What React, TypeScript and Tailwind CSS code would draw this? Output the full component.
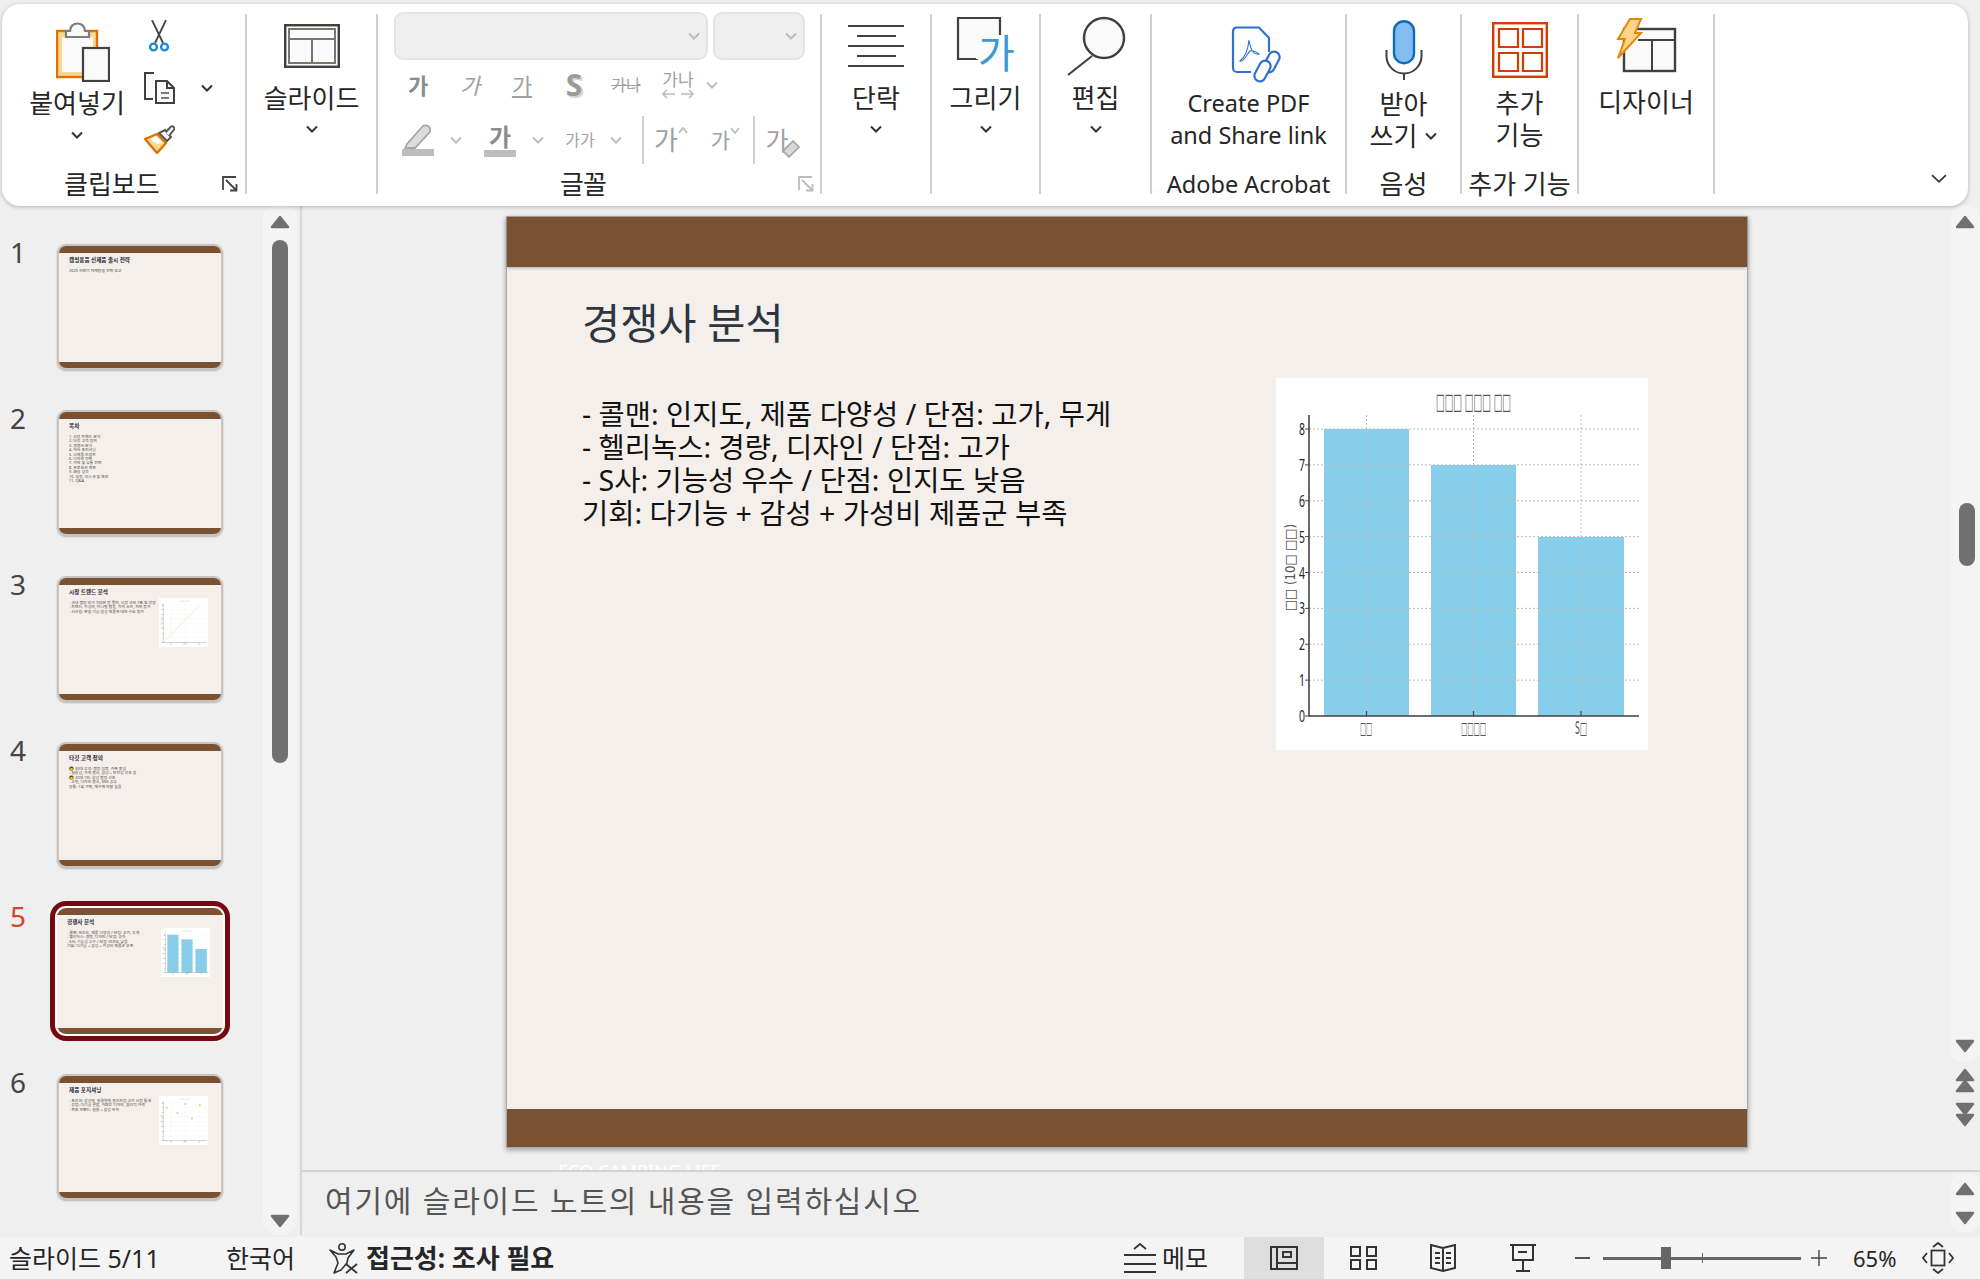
import React from "react";

const dark = "#404040";

const Chev = ({ gray = false, big = false }: { gray?: boolean; big?: boolean }) => (
  <svg width={big ? 18 : 12} height={big ? 11 : 8} viewBox="0 0 12 8" className="shrink-0">
    <path d="M1 1.5 6 6.5 11 1.5" fill="none" stroke={gray ? "#bdbdbd" : "#333"} strokeWidth={big ? 1.2 : 2} />
  </svg>
);

const Launcher = ({ gray = false }: { gray?: boolean }) => (
  <svg width="16" height="16" viewBox="0 0 16 16" className="shrink-0">
    <path d="M1 14V1H14M4 4 14.5 14.5M14.5 8V14.5H8" fill="none" stroke={gray ? "#bdbdbd" : "#444"} strokeWidth="1.8" />
  </svg>
);

const PasteIcon = () => (
  <svg width="54" height="60" viewBox="0 0 54 60">
    <rect x="1" y="9" width="40" height="46" fill="#fad98f" stroke="#e07000" strokeWidth="2.4" />
    <rect x="6" y="15" width="31" height="35" fill="#fafafa" />
    <path d="M10 15V9H14C14 -1 29 -1 29 9H33V15Z" fill="#fafafa" stroke="#7d7d7d" strokeWidth="2.2" />
    <rect x="27" y="26" width="26" height="33" fill="#fafafa" stroke={dark} strokeWidth="2.2" />
  </svg>
);

const Scissors = () => (
  <svg width="22" height="32" viewBox="0 0 22 32">
    <path d="M4 0 15 23M18 0 7 23" fill="none" stroke="#444" strokeWidth="1.8" />
    <circle cx="5.5" cy="27" r="3.4" fill="#fff" stroke="#1e8ad2" strokeWidth="2.4" />
    <circle cx="16.5" cy="27" r="3.4" fill="#fff" stroke="#1e8ad2" strokeWidth="2.4" />
  </svg>
);

const CopyIcon = () => (
  <svg width="32" height="32" viewBox="0 0 32 32">
    <path d="M11 1H2V27H10" fill="#fafafa" stroke={dark} strokeWidth="2" />
    <path d="M13 9H24L31 16V31H13Z" fill="#fafafa" stroke={dark} strokeWidth="2" />
    <path d="M24 9V16H31" fill="none" stroke={dark} strokeWidth="2" />
    <path d="M18 21H26M18 26H26" stroke="#7a7a7a" strokeWidth="2" />
  </svg>
);

const BrushIcon = () => (
  <svg width="32" height="30" viewBox="0 0 32 30">
    <path d="M2 15 14 10 23 19 14 29Z" fill="#fad98f" stroke="#e07000" strokeWidth="2.4" strokeLinejoin="round" />
    <path d="M13 12 20 19 14 20 7 15Z" fill="#fff" />
    <path d="M16 9 24 17 28 13 22 6Z" fill="#fafafa" stroke="#555" strokeWidth="2" />
    <path d="M23 8 28 2.5A2.2 2.2 0 0 1 31 5.5L26 12" fill="#fafafa" stroke="#555" strokeWidth="2" />
  </svg>
);

const SlideIcon = () => (
  <svg width="56" height="44" viewBox="0 0 56 44">
    <rect x="1.2" y="1.2" width="53.6" height="41.6" fill="#fafafa" stroke={dark} strokeWidth="2.4" />
    <path d="M5 5H51V39H5ZM5 15H51M28 15V39" fill="none" stroke="#77776f" strokeWidth="2" />
  </svg>
);

const ParaIcon = () => (
  <svg width="58" height="44" viewBox="0 0 58 44">
    <path d="M1 2H57M10 12H49M1 22H57M10 32H49M1 42H57" stroke={dark} strokeWidth="2" />
  </svg>
);

const DrawIcon = () => (
  <svg width="60" height="62" viewBox="0 0 60 62">
    <path d="M44 20V3H2V44H22" fill="#fafafa" stroke={dark} strokeWidth="2.2" />
    <path d="M20 20H44V44H20Z" fill="#fafafa" />
    <text x="22" y="53" fontSize="40" fill="#3a9ad9">가</text>
  </svg>
);

const FindIcon = () => (
  <svg width="62" height="62" viewBox="0 0 62 62">
    <path d="M27 41 3 60" stroke={dark} strokeWidth="2.2" />
    <circle cx="39" cy="23" r="20" fill="#fafafa" stroke={dark} strokeWidth="2.4" />
  </svg>
);

const AcrobatIcon = () => (
  <svg width="52" height="57" viewBox="0 0 52 57">
    <path d="M20 46H6A4 4 0 0 1 2 42V5A4 4 0 0 1 6 1.5H28L38 12V26" fill="#fff" stroke="#2f6fd6" strokeWidth="2.2" />
    <path d="M18 14C17 24 14 31 9 35 12 37 16 28 19 25 22 24 27 27 28 28 24 29 20 27 18 14Z" fill="none" stroke="#2f6fd6" strokeWidth="1.1" />
    <rect x="35" y="25" width="11" height="22" rx="5.5" fill="#fff" stroke="#2f6fd6" strokeWidth="2.2" transform="rotate(28 40.5 36)" />
    <rect x="26" y="34" width="11" height="22" rx="5.5" fill="#fff" stroke="#2f6fd6" strokeWidth="2.2" transform="rotate(28 31.5 45)" />
  </svg>
);

const MicIcon = () => (
  <svg width="38" height="60" viewBox="0 0 38 60">
    <path d="M1.5 30V36A17.5 17.5 0 0 0 36.5 36V30M19 53V60" fill="none" stroke={dark} strokeWidth="2" />
    <rect x="9" y="1.2" width="20" height="42" rx="10" fill="#83bdf0" stroke="#0f6cbd" strokeWidth="2.4" />
  </svg>
);

const AddinsIcon = () => (
  <svg width="56" height="56" viewBox="0 0 56 56">
    <rect x="1.2" y="1.2" width="53.6" height="53.6" fill="#fff" stroke="#d83b01" strokeWidth="2.4" />
    <path d="M7 7H26V25H7ZM31 7H50V25H31ZM7 31H26V49H7ZM31 31H50V49H31Z" fill="#fff" stroke="#d83b01" strokeWidth="2.2" />
  </svg>
);

const DesignerIcon = () => (
  <svg width="61" height="55" viewBox="0 0 61 55">
    <rect x="8" y="11" width="51" height="42" fill="#fafafa" stroke={dark} strokeWidth="2.4" />
    <path d="M22 22H58M36 22V52" stroke={dark} strokeWidth="2" />
    <path d="M14 1H25L19 15H25L2 40 9 21H2Z" fill="#fcd58a" stroke="#e8860c" strokeWidth="2" strokeLinejoin="miter" />
  </svg>
);

const Group = ({ w, label, children, labelRow }: { w: string; label?: string; children: React.ReactNode; labelRow?: React.ReactNode }) => (
  <div className={`${w} h-[180px] shrink-0 border-r-2 border-[#cfcfcf] flex flex-col`}>
    <div className="h-[160px] flex flex-col items-center">{children}</div>
    <div className="h-[20px] leading-[20px] text-[26px] text-center whitespace-nowrap">
      {labelRow ?? label}
    </div>
  </div>
);

const BigLabel = ({ children }: { children: React.ReactNode }) => (
  <div className="h-[30px] leading-[30px] text-[26px] whitespace-nowrap text-center">{children}</div>
);

const Simple = ({ icon, text }: { icon: React.ReactNode; text: string }) => (
  <>
    <div className="h-[64px] flex items-center justify-center">{icon}</div>
    <div className="mt-[5px]"><BigLabel>{text}</BigLabel></div>
    <div className="mt-[12px] flex"><Chev /></div>
  </>
);

const gray = "text-[#a0a0a0]";

const FontGroup = () => (
  <Group
    w="w-[444px]"
    labelRow={
      <div className="flex items-center pl-[182px]">
        <span className="w-[234px] text-left tracking-[-1px]">글꼴</span>
        <span className="ml-[4px] flex"><Launcher gray /></span>
      </div>
    }
  >
    <div className="w-full pl-[16px]">
      <div className="mt-[-2px] flex gap-[5px]">
        <div className="w-[314px] h-[48px] rounded-[9px] bg-[#efefef] border-2 border-[#e4e4e4] flex items-center justify-end pr-[6px]"><Chev gray /></div>
        <div className="w-[92px] h-[48px] rounded-[9px] bg-[#efefef] border-2 border-[#e4e4e4] flex items-center justify-end pr-[6px]"><Chev gray /></div>
      </div>
      <div className={`ml-[-2px] mt-[10px] h-[30px] flex items-center ${gray}`}>
        <span className="w-[52px] text-center text-[22px] font-bold leading-[30px] text-[#8c8c8c]">가</span>
        <span className="w-[52px] text-center text-[22px] italic leading-[30px]">가</span>
        <span className="w-[52px] text-center text-[22px] underline leading-[30px]">가</span>
        <span className="w-[52px] text-center text-[30px] font-bold leading-[30px] text-[#9a9a9a] [text-shadow:2px_2px_0_#d6d6d6]">S</span>
        <span className="w-[52px] text-center text-[16px] line-through leading-[30px]">가나</span>
        <span className="w-[52px] flex flex-col items-center">
          <span className="text-[17px] leading-[18px]">가나</span>
          <svg width="32" height="10" viewBox="0 0 32 10"><path d="M13 5H1M5 1 1 5 5 9M19 5H31M27 1 31 5 27 9" fill="none" stroke="#bdbdbd" strokeWidth="1.6" /></svg>
        </span>
        <span className="ml-[2px] flex"><Chev gray /></span>
      </div>
      <div className={`ml-[4px] mt-[16px] h-[48px] flex items-center ${gray}`}>
        <span className="w-[40px] flex justify-center">
          <svg width="32" height="32" viewBox="0 0 32 32">
            <path d="M5 20 20 3A3 3 0 0 1 27 9L13 24H7L3 25Z" fill="#dcdcdc" stroke="#a4a4a4" strokeWidth="1.8" />
            <rect x="0" y="25" width="32" height="7" fill="#bdbdbd" />
          </svg>
        </span>
        <span className="w-[36px] flex justify-center"><Chev gray /></span>
        <span className="w-[52px] flex flex-col items-center">
          <span className="text-[24px] font-bold leading-[26px] text-[#8c8c8c]">가</span>
          <span className="w-[32px] h-[7px] bg-[#bdbdbd]" />
        </span>
        <span className="w-[24px] flex justify-center"><Chev gray /></span>
        <span className="w-[60px] text-center text-[16px]">가가</span>
        <span className="w-[12px] flex justify-center"><Chev gray /></span>
        <span className="ml-[20px] w-[2px] h-[48px] bg-[#cfcfcf]" />
        <span className="w-[54px] flex justify-center items-start text-[26px] leading-[34px]">
          가
          <svg width="10" height="7" viewBox="0 0 10 7" className="mt-[4px]"><path d="M1 6 5 1 9 6" fill="none" stroke="#bdbdbd" strokeWidth="1.8" /></svg>
        </span>
        <span className="w-[55px] flex justify-center items-start text-[21px] leading-[34px]">
          가
          <svg width="10" height="7" viewBox="0 0 10 7" className="mt-[4px]"><path d="M1 1 5 6 9 1" fill="none" stroke="#bdbdbd" strokeWidth="1.8" /></svg>
        </span>
        <span className="w-[2px] h-[48px] bg-[#cfcfcf]" />
        <span className="w-[54px] relative text-center text-[25px] leading-[30px]">
          <span className="mr-[10px]">가</span>
          <svg width="20" height="20" viewBox="0 0 20 20" className="absolute right-[8px] top-[14px]"><path d="M2 12 12 2 18 8 8 18Z" fill="#d8d8d8" stroke="#ababab" strokeWidth="1.8" /></svg>
        </span>
      </div>
    </div>
  </Group>
);

const Ribbon = () => (
  <div className="ml-[2px] mt-[4px] w-[1966px] h-[202px] bg-white rounded-[18px] shadow-[0_1px_4px_rgba(0,0,0,0.25)] pt-[10px] flex text-[#262626] relative z-10">
    <Group
      w="w-[245px]"
      labelRow={
        <div className="flex items-center pl-[62px]">
          <span>클립보드</span>
          <span className="ml-auto mr-[7px] flex"><Launcher /></span>
        </div>
      }
    >
      <div className="w-full flex">
        <div className="w-[138px] pl-[12px] flex flex-col items-center">
          <div className="pt-[8px] pl-[12px] flex"><PasteIcon /></div>
          <div className="mt-[6px]"><BigLabel>붙여넣기</BigLabel></div>
          <div className="mt-[13px] flex"><Chev /></div>
        </div>
        <div className="w-[38px] flex flex-col items-center pt-[6px]">
          <Scissors />
          <div className="mt-[20px] flex"><CopyIcon /></div>
          <div className="mt-[20px] flex"><BrushIcon /></div>
        </div>
        <div className="ml-[23px] mt-[70px]"><Chev /></div>
      </div>
    </Group>
    <Group w="w-[131px]"><Simple icon={<SlideIcon />} text="슬라이드" /></Group>
    <FontGroup />
    <Group w="w-[110px]"><Simple icon={<ParaIcon />} text="단락" /></Group>
    <Group w="w-[109px]"><Simple icon={<DrawIcon />} text="그리기" /></Group>
    <Group w="w-[111px]"><Simple icon={<FindIcon />} text="편집" /></Group>
    <Group w="w-[195px]" label="">
      <div className="pt-[12px] pl-[16px] flex"><AcrobatIcon /></div>
      <div className="mt-[4px] text-[23.5px] leading-[32px] text-center whitespace-nowrap">
        <div>Create PDF</div>
        <div>and Share link</div>
      </div>
      <div className="mt-auto h-0 text-[23.5px] leading-[0px] translate-y-[10px] whitespace-nowrap">Adobe Acrobat</div>
    </Group>
    <Group w="w-[115px]" label="음성">
      <div className="pt-[6px] flex"><MicIcon /></div>
      <div className="mt-[8px] text-[26px] leading-[32px] text-center whitespace-nowrap">
        <div>받아</div>
        <div className="flex items-center justify-center gap-[8px]">쓰기 <Chev /></div>
      </div>
    </Group>
    <Group w="w-[117px]" label="추가 기능">
      <div className="pt-[8px] flex"><AddinsIcon /></div>
      <div className="mt-[9px] text-[26px] leading-[32px] text-center whitespace-nowrap">
        <div>추가</div>
        <div>기능</div>
      </div>
    </Group>
    <Group w="w-[136px]">
      <div className="pt-[4px] flex"><DesignerIcon /></div>
      <div className="mt-[14px]"><BigLabel>디자이너</BigLabel></div>
    </Group>
    <div className="ml-auto mr-[20px] mb-[22px] self-end flex"><Chev big /></div>
  </div>
);

const Arrow = ({ down = false, w = 20 }: { down?: boolean; w?: number }) => (
  <svg width={w} height="14" viewBox="0 0 20 14" className="shrink-0">
    <path d={down ? "M2 2H18L10 12Z" : "M10 2 18 12H2Z"} fill="#707070" stroke="#707070" strokeWidth="2.4" strokeLinejoin="round" />
  </svg>
);

const Grid = ({ bars, points, line }: { bars?: boolean; points?: boolean; line?: boolean }) => {
  const ys = [0, 1, 2, 3, 4, 5, 6, 7, 8];
  return (
    <svg viewBox="0 0 372 372" className="w-full h-full block bg-white">
      {bars && (
        <>
          <rect x="48" y="51" width="85" height="287" fill="#87ceeb" />
          <rect x="155" y="87" width="85" height="251" fill="#87ceeb" />
          <rect x="262" y="159" width="86" height="179" fill="#87ceeb" />
        </>
      )}
      {ys.map((k) => (
        <g key={k}>
          <line x1="33" x2="363" y1={338 - 35.875 * k} y2={338 - 35.875 * k} stroke="#bcbcbc" strokeDasharray="2 2" strokeWidth="1" />
          <line x1="29" x2="33" y1={338 - 35.875 * k} y2={338 - 35.875 * k} stroke="#444" strokeWidth="1" />
          <text x="23" y={344 - 35.875 * k} fontSize="16" fill="#222" textLength="6" lengthAdjust="spacingAndGlyphs">{k}</text>
        </g>
      ))}
      {[90.5, 197.5, 305].map((x) => (
        <g key={x}>
          <line x1={x} x2={x} y1="37" y2="338" stroke="#bcbcbc" strokeDasharray="2 2" strokeWidth="1" />
          <line x1={x} x2={x} y1="333" y2="338" stroke="#444" strokeWidth="1.2" />
        </g>
      ))}
      {line && <path d="M33 338 305 60" stroke="#f4c87a" strokeWidth="3" fill="none" />}
      {points && [[60, 90], [140, 130], [200, 60], [250, 170], [310, 70]].map(([x, y]) => (
        <circle key={x} cx={x} cy={y} r="7" fill="#f4b76a" />
      ))}
      <path d="M33 37V338H363" fill="none" stroke="#444" strokeWidth="1.6" />
      <text x="160" y="31" fontSize="22" fill="#555" textLength="75" lengthAdjust="spacingAndGlyphs" fontFamily="'DejaVu Sans', sans-serif">□□□ □□□ □□</text>
      <text transform="translate(19 233) rotate(-90)" fontSize="14" fill="#555" textLength="87" lengthAdjust="spacingAndGlyphs" fontFamily="'DejaVu Sans', sans-serif">□□ (10□ □□)</text>
      <text x="84" y="356" fontSize="17" fill="#555" textLength="12" lengthAdjust="spacingAndGlyphs" fontFamily="'DejaVu Sans', sans-serif">□□</text>
      <text x="185" y="356" fontSize="17" fill="#555" textLength="25" lengthAdjust="spacingAndGlyphs" fontFamily="'DejaVu Sans', sans-serif">□□□□</text>
      <text x="299" y="356" fontSize="17" fill="#555" textLength="12" lengthAdjust="spacingAndGlyphs" fontFamily="'DejaVu Sans', sans-serif">S□</text>
    </svg>
  );
};

const slides: { title: string; lines: string[]; chart?: "line" | "bar" | "dots" }[] = [
  { title: "캠핑용품 신제품 출시 전략", lines: ["2025 하반기 마케팅실 전략 보고"] },
  {
    title: "목차",
    lines: ["1. 시장 트렌드 분석", "2. 타깃 고객 정의", "3. 경쟁사 분석", "4. 자사 포지셔닝", "5. 신제품 컨셉트", "6. 디자인 전략", "7. 가격 및 유통 전략", "8. 프로모션 계획", "9. 예상 성과", "10. 일정, 리스크 및 제언", "11. Q&A"],
  },
  {
    title: "시장 트렌드 분석",
    lines: ["- 국내 캠핑 인구 700만 명 돌파, 시장 규모 7조 원 전망", "- 트렌드: 가성비, 미니멀 캠핑, 가치 소비, 차박 증가", "- 시사점: 복합 기능·감성 제품에 대한 수요 증가"],
    chart: "line",
  },
  {
    title: "타깃 고객 정의",
    lines: ["🧑 30대 부부: 캠핑 입문, 가족 중심", "- 실용성, 가격 중시, 감성 + 안전성 선호 층", "🧑 20대 1인: 감성 캠핑 선호", "- 소형, 디자인 중시, SNS 공유", "공통: 1회 구매, 재구매 의향 높음"],
  },
  {
    title: "경쟁사 분석",
    lines: ["- 콜맨: 인지도, 제품 다양성 / 단점: 고가, 무게", "- 헬리녹스: 경량, 디자인 / 단점: 고가", "- S사: 기능성 우수 / 단점: 인지도 낮음", "기회: 다기능 + 감성 + 가성비 제품군 부족"],
    chart: "bar",
  },
  {
    title: "제품 포지셔닝",
    lines: ["- 포지션: 감성형, 실용형의 중간지점 고가 시장 틈새", "- 강점: 다기능 결합, 가벼운 디자인, 합리적 가격", "- 목표 브랜드: 실용 + 감성 위치"],
    chart: "dots",
  },
];

const Thumb = ({ s, active }: { s: (typeof slides)[number]; active: boolean }) => (
  <div className={`w-[166px] h-[126px] rounded-[9px] bg-[#f4efeb] flex flex-col overflow-hidden ${active ? "shadow-[0_0_0_2px_#ffffff,0_0_0_7px_#760812]" : "border-2 border-[#c8c3be] shadow-[0_1px_2px_rgba(0,0,0,0.25)]"}`}>
    <div className="h-[7px] shrink-0 bg-[#7a5232]" />
    <div className="flex-1 flex pl-[10px] pr-[12px] min-h-0">
      <div className="flex-1 min-w-0">
        <div className="mt-[4px] text-[5.6px] leading-[7px] font-bold text-[#1c2430] whitespace-nowrap">{s.title}</div>
        <div className="mt-[5px] text-[3.9px] leading-[4.4px] text-[#4a4542] whitespace-nowrap">
          {s.lines.map((l) => <div key={l}>{l}</div>)}
        </div>
      </div>
      {s.chart && (
        <div className="w-[49px] h-[49px] mt-[13px] shrink-0 mr-[1px]">
          <Grid bars={s.chart === "bar"} line={s.chart === "line"} points={s.chart === "dots"} />
        </div>
      )}
    </div>
    <div className="h-[6px] shrink-0 bg-[#7a5232]" />
  </div>
);

const ThumbPanel = () => (
  <div className="w-[302px] shrink-0 border-r-2 border-[#d6d6d6] flex">
    <div className="w-[263px] pt-[38px] flex flex-col gap-[40px]">
      {slides.map((s, i) => (
        <div key={s.title} className="flex h-[126px]">
          <div className={`w-[57px] pl-[10px] mt-[-5px] text-[28px] leading-[26px] ${i === 4 ? "text-[#d2472a]" : "text-[#444]"}`}>{i + 1}</div>
          <Thumb s={s} active={i === 4} />
        </div>
      ))}
    </div>
    <div className="w-[34px] h-[1029px] bg-[#f4f4f4] rounded-b-[16px] rounded-t-[10px] flex flex-col items-center pt-[9px] pb-[7px]">
      <Arrow />
      <div className="mt-[11px] w-[16px] h-[523px] rounded-full bg-[#707070]" />
      <div className="mt-auto flex"><Arrow down /></div>
    </div>
  </div>
);

const SlideView = () => (
  <div className="ml-[204px] mt-[10px] w-[1242px] h-[932px] bg-[#f4efeb] border border-[#a8a8a8] shadow-[0_2px_5px_rgba(0,0,0,0.35)] flex flex-col shrink-0">
    <div className="h-[50px] bg-[#7a5232] shadow-[0_1px_3px_rgba(0,0,0,0.3)] shrink-0" />
    <div className="flex-1 flex pl-[75px]">
      <div className="w-[694px]">
        <div className="mt-[26px] text-[41.5px] leading-[60px] text-[#2d3540] whitespace-nowrap">경쟁사 분석</div>
        <div className="mt-[45px] text-[28.5px] leading-[33px] text-[#111] whitespace-nowrap">
          <div>- 콜맨: 인지도, 제품 다양성 / 단점: 고가, 무게</div>
          <div>- 헬리녹스: 경량, 디자인 / 단점: 고가</div>
          <div>- S사: 기능성 우수 / 단점: 인지도 낮음</div>
          <div>기회: 다기능 + 감성 + 가성비 제품군 부족</div>
        </div>
      </div>
      <div className="w-[372px] h-[372px] mt-[111px]"><Grid bars /></div>
    </div>
    <div className="h-[38px] bg-[#7a5232] shrink-0" />
  </div>
);

const RightScroll = () => (
  <div className="w-[30px] shrink-0 flex flex-col items-center">
    <div className="w-full h-[856px] bg-[#f4f4f4] rounded-[12px] flex flex-col items-center pt-[9px] pb-[9px]">
      <Arrow />
      <div className="mt-[274px] ml-[4px] w-[16px] h-[63px] rounded-[8px] bg-[#707070]" />
      <div className="mt-auto flex"><Arrow down /></div>
    </div>
    <div className="mt-[6px] flex flex-col">
      <Arrow />
      <div className="mt-[-3px] flex"><Arrow /></div>
    </div>
    <div className="mt-[9px] flex flex-col">
      <Arrow down />
      <div className="mt-[-3px] flex"><Arrow down /></div>
    </div>
  </div>
);

const Status = () => (
  <div className="mt-[2px] h-[42px] bg-[#f4f4f4] flex items-center text-[25px] leading-[42px] text-[#262626] whitespace-nowrap">
    <span className="w-[226px] pl-[9px] shrink-0 text-[25px]">슬라이드 5/11</span>
    <span className="w-[103px] shrink-0">한국어</span>
    <svg width="30" height="32" viewBox="0 0 30 32" className="shrink-0">
      <circle cx="13" cy="5" r="3.2" fill="none" stroke="#333" strokeWidth="1.6" />
      <path d="M1 8 9 12 17 12 25 8 19 16 18 21 12 28 5 31 9 21 7 15Z" fill="none" stroke="#333" strokeWidth="1.6" strokeLinejoin="round" />
      <path d="M17 22 28 31M28 22 17 31" stroke="#333" strokeWidth="1.8" />
    </svg>
    <span className="ml-[7px] font-bold text-[26px] w-[758px] shrink-0">접근성: 조사 필요</span>
    <svg width="32" height="30" viewBox="0 0 32 30" className="shrink-0">
      <path d="M10 6 16 1 22 6" fill="none" stroke="#333" strokeWidth="1.8" />
      <path d="M0 12H32M0 21H32M0 29H32" stroke="#333" strokeWidth="2" />
    </svg>
    <span className="ml-[6px] w-[82px] shrink-0">메모</span>
    <div className="w-[80px] h-[42px] bg-[#dedede] flex items-center justify-center shrink-0">
      <svg width="28" height="24" viewBox="0 0 28 24">
        <path d="M1 1H27V23H1ZM7 1V23M7 17H27M13 6H21V11H13Z" fill="none" stroke="#333" strokeWidth="2" />
      </svg>
    </div>
    <svg width="28" height="24" viewBox="0 0 28 24" className="ml-[26px] shrink-0">
      <path d="M1 1H10V10H1ZM17 1H26V10H17ZM1 14H10V23H1ZM17 14H26V23H17Z" fill="none" stroke="#333" strokeWidth="2" />
    </svg>
    <svg width="26" height="28" viewBox="0 0 26 28" className="ml-[52px] shrink-0">
      <path d="M13 4 1 1V24L13 27 25 24V1ZM13 4V27" fill="none" stroke="#333" strokeWidth="2" />
      <path d="M5 9H10M5 14H10M5 19H10M16 9H21M16 14H21M16 19H21" stroke="#333" strokeWidth="2" />
    </svg>
    <svg width="26" height="30" viewBox="0 0 26 30" className="ml-[54px] shrink-0">
      <path d="M0 2H26M3 2V17H23V2M8 9H17M13 17V28M6 28H20" fill="none" stroke="#333" strokeWidth="2" />
    </svg>
    <div className="ml-[39px] w-[15px] h-[2px] bg-[#555] shrink-0" />
    <div className="ml-[13px] w-[198px] h-[42px] shrink-0 flex items-center relative">
      <div className="w-full h-[3px] bg-[#666]" />
      <div className="absolute left-[58px] top-[10px] w-[10px] h-[22px] bg-[#666]" />
      <div className="absolute left-[99px] top-[16px] w-[1px] h-[10px] bg-[#666]" />
    </div>
    <svg width="16" height="16" viewBox="0 0 16 16" className="ml-[10px] shrink-0">
      <path d="M0 8H16M8 0V16" stroke="#444" strokeWidth="1.4" />
    </svg>
    <span className="ml-[26px] w-[69px] shrink-0 text-[22px]">65%</span>
    <svg width="32" height="32" viewBox="0 0 32 32" className="shrink-0">
      <path d="M11 5 16 1 21 5M11 27 16 31 21 27M5 11 1 16 5 21M27 11 31 16 27 21" fill="none" stroke="#333" strokeWidth="1.8" />
      <rect x="9.5" y="8.5" width="13" height="15" fill="none" stroke="#333" strokeWidth="1.8" />
    </svg>
  </div>
);

const App: React.FC = () => (
  <div className="w-[1980px] h-[1279px] overflow-hidden bg-[#efefef] font-['Noto_Sans','Noto_Sans_CJK_KR',sans-serif]">
    <Ribbon />
    <div className="h-[1029px] flex">
      <ThumbPanel />
      <div className="flex-1 min-w-0 flex flex-col">
        <div className="h-[964px] flex">
          <div className="flex-1 min-w-0 overflow-hidden">
            <SlideView />
            <div className="ml-[256px] mt-[11px] text-[18px] leading-[24px] text-white whitespace-nowrap">ECO CAMPING LIFE</div>
          </div>
          <RightScroll />
        </div>
        <div className="h-[65px] border-t-2 border-[#d4d4d4] flex">
          <div className="flex-1 pl-[23px] text-[30px] leading-[58px] text-[#555] tracking-[1.8px] whitespace-nowrap">여기에 슬라이드 노트의 내용을 입력하십시오</div>
          <div className="w-[30px] h-[58px] mt-[2px] bg-[#f4f4f4] rounded-[12px] flex flex-col items-center justify-center gap-[15px]">
            <Arrow />
            <Arrow down />
          </div>
        </div>
      </div>
    </div>
    <Status />
  </div>
);

export default App;
